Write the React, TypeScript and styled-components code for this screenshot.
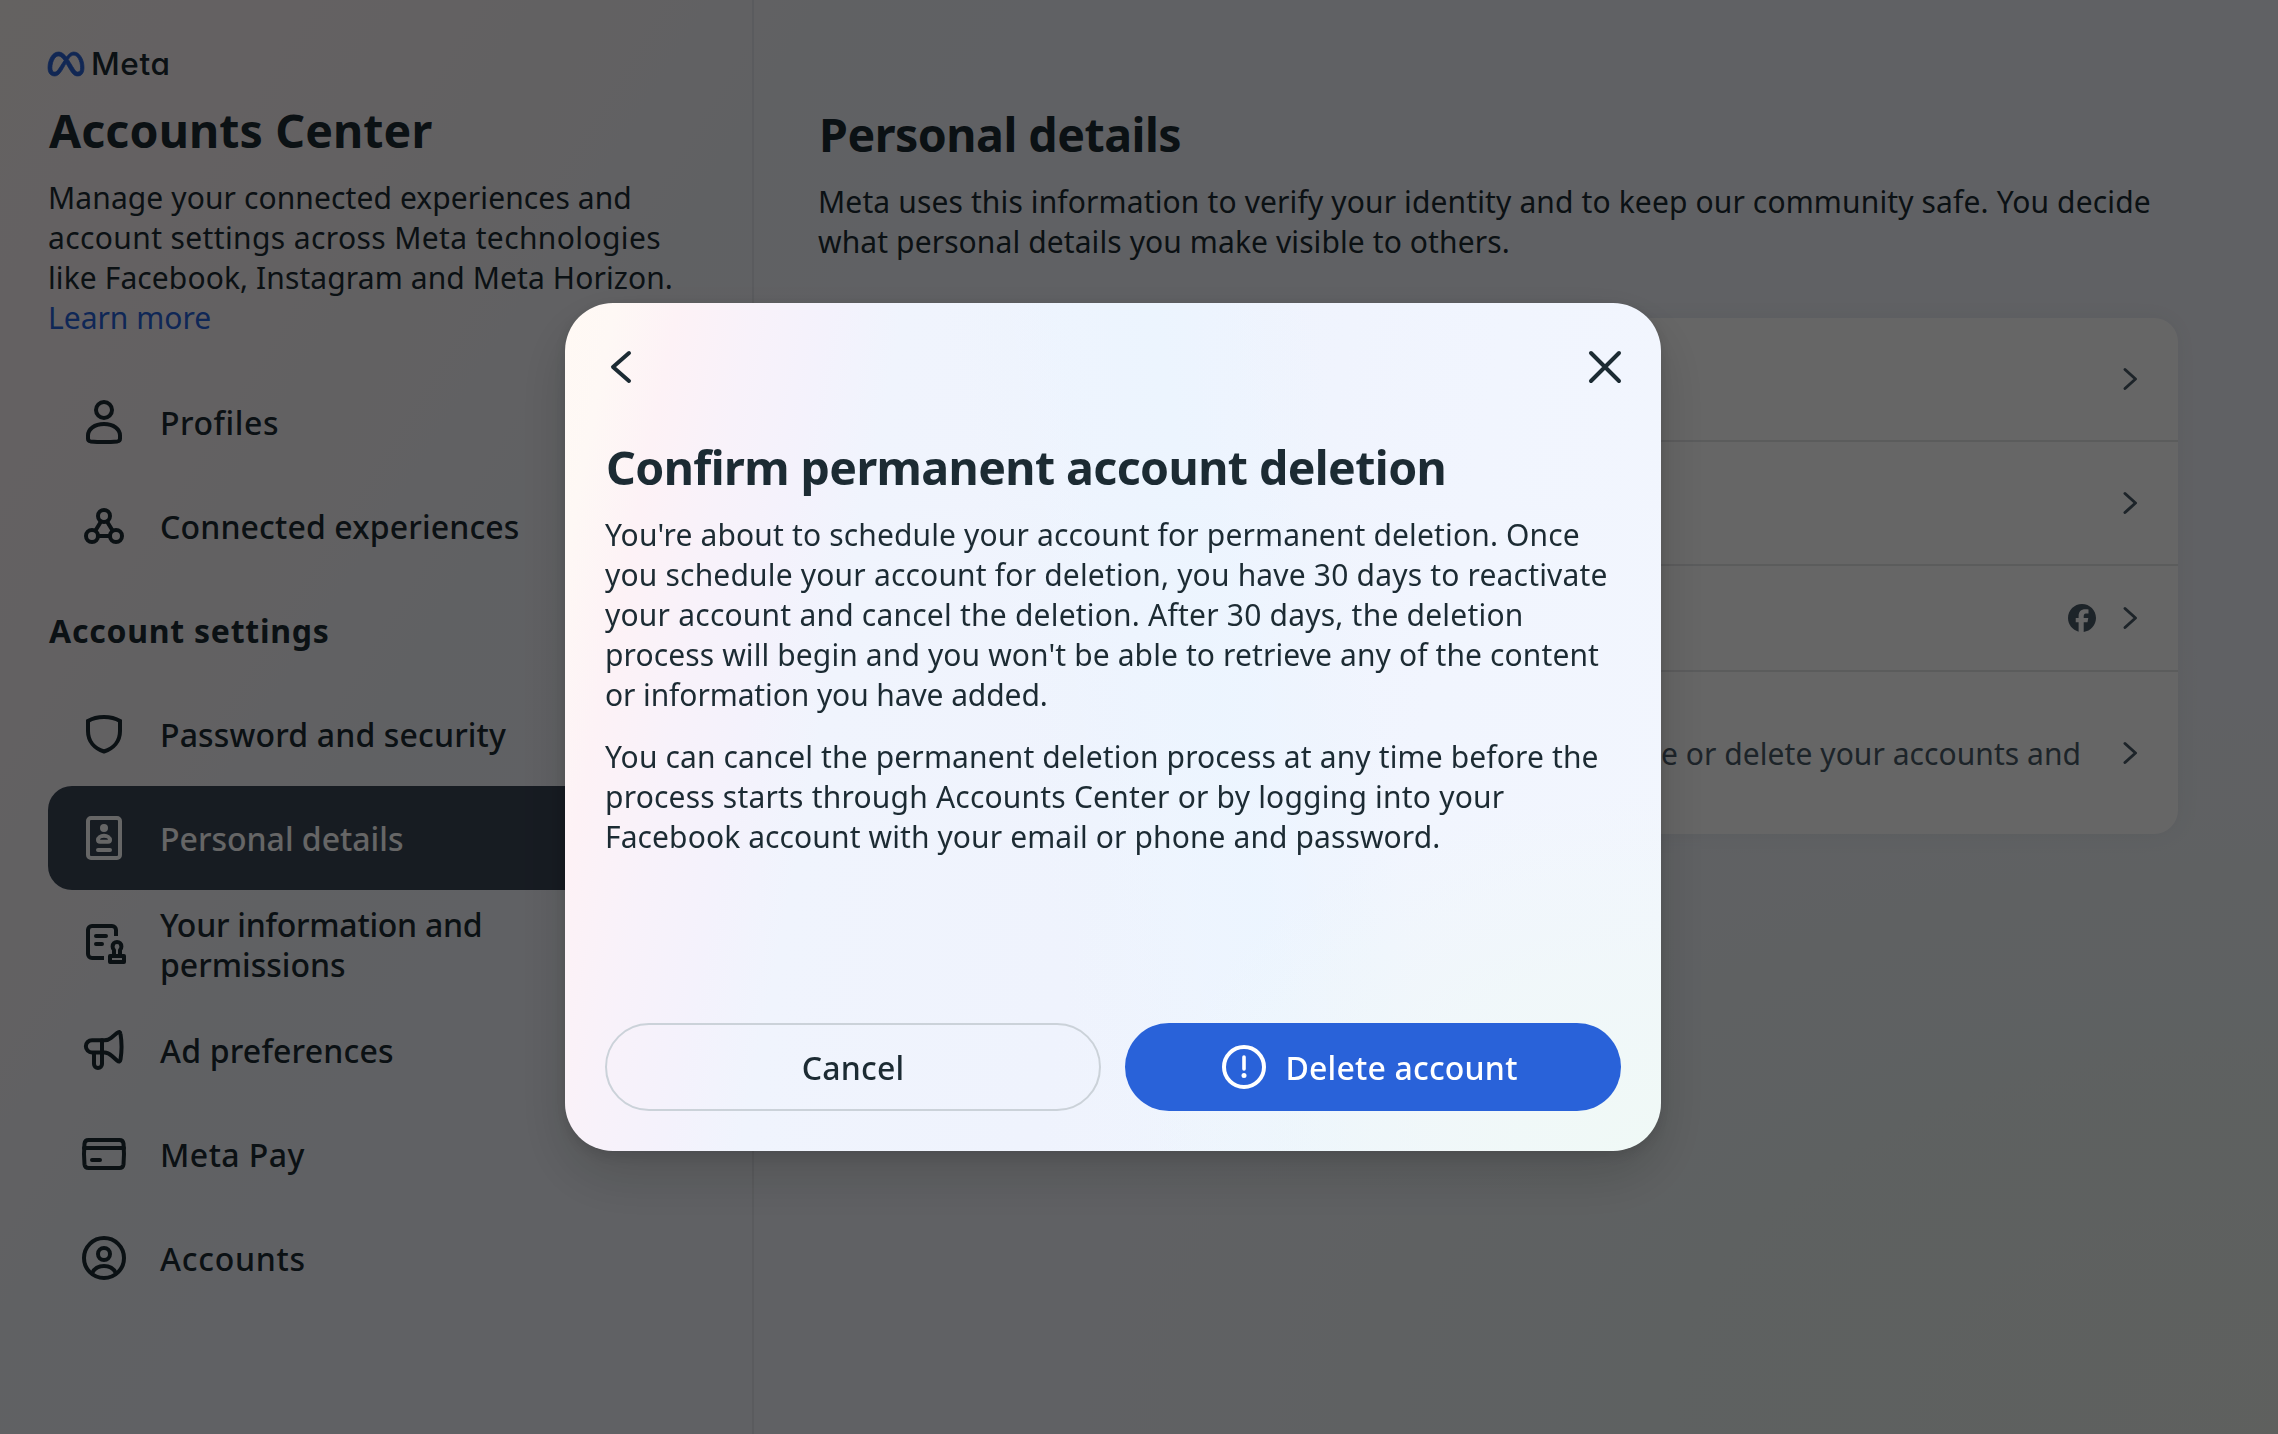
import React from "react";
import styled, { createGlobalStyle } from "styled-components";
import { SiFacebook, SiMeta } from "react-icons/si";

const ink = "#1c2b33";
const muted = "#4a5a68";
const sans = `"Noto Sans", "Open Sans", sans-serif`;

const GlobalStyle = createGlobalStyle`
  * { box-sizing: border-box; }
  body { margin: 0; font-family: ${sans}; color: ${ink}; overflow: hidden; }
  h1, h2, p, nav, ul, li { margin: 0; padding: 0; list-style: none; }
  button { font: inherit; color: inherit; background: none; border: 0; padding: 0; }
`;

const Page = styled.div`
  display: flex;
  width: 100vw;
  height: 100vh;
  background:
    radial-gradient(ellipse 620px 420px at 100% 100%, rgba(240, 240, 234, 0.5), rgba(240, 240, 234, 0) 100%),
    radial-gradient(ellipse 1300px 800px at 100% 100%, #e9f1ee 0%, rgba(233, 242, 240, 0.75) 45%, rgba(240, 243, 252, 0) 100%),
    linear-gradient(122deg, #faf4f2 0%, #faf3f5 6%, #f8f2f6 13%, #f5f3f6 19%, #f1f3f8 26%, #f0f3fa 40%, #f1f3fa 100%);
`;

const Sidebar = styled.aside`
  width: 754px;
  flex: none;
  padding: 48px 48px 0;
  border-right: 2px solid #e1e4ea;
`;

const Brand = styled.div`
  display: flex;
  align-items: center;
  height: 32px;
  gap: 7px;
  margin-bottom: 22px;
  font-family: Inter, sans-serif;
  font-feature-settings: "cv11";
  font-size: 31.5px;
  font-weight: 500;
  line-height: 32px;
  letter-spacing: 0.6px;

  svg {
    color: #2b62d2;
    stroke: currentColor;
    stroke-width: 0.5;
    overflow: visible;
  }
`;

const Title = styled.h1`
  padding-left: 1px;
  font-size: 46.5px;
  font-weight: 700;
  line-height: 56px;
  margin-bottom: 20px;
  white-space: nowrap;
`;

const Line = styled.span<{ $track?: number }>`
  display: block;
  white-space: nowrap;
  letter-spacing: ${(p) => p.$track ?? 0}px;
`;

const Copy = styled.p`
  font-size: 30px;
  line-height: 40px;

  & + & { margin-top: 22px; }
`;

const Link = styled.a`
  color: #2761d8;
`;

const Nav = styled.ul`
  margin-top: 32px;
`;

const SectionLabel = styled.li`
  height: 104px;
  display: flex;
  align-items: center;
  padding: 2px 0 0 1px;
  font-size: 32px;
  font-weight: 700;
  line-height: 40px;
  letter-spacing: 0.75px;
`;

const NavItem = styled.li<{ $active?: boolean }>`
  display: flex;
  align-items: center;
  gap: 32px;
  min-height: 104px;
  padding: 14px 32px;
  border-radius: 24px;
  font-size: 32px;
  font-weight: 500;
  line-height: 40px;
  color: ${(p) => (p.$active ? "#ffffff" : ink)};
  background: ${(p) => (p.$active ? "#3a4656" : "transparent")};
`;

const NavLabel = styled.span`
  margin: 1px 0 -1px;
`;

const Icon = styled.svg`
  width: 48px;
  height: 48px;
  flex: none;
  fill: none;
  stroke: currentColor;
  stroke-width: 4;
  stroke-linecap: round;
  stroke-linejoin: round;
`;

const Content = styled.main`
  flex: 1;
  padding: 106px 100px 0 64px;
`;

const Card = styled.ul`
  margin-top: 56px;
  border-radius: 24px;
  background: #ffffff;
  box-shadow: 0 0 24px rgba(52, 72, 84, 0.07);
`;

const CardRow = styled.li<{ $height: number }>`
  display: flex;
  align-items: center;
  justify-content: flex-end;
  box-sizing: content-box;
  height: ${(p) => p.$height}px;
  padding-right: 36px;
  color: ${muted};

  & + & { border-top: 2px solid #e4e5e7; }
`;

const RowNote = styled.span`
  margin: 2px 37px 0 0;
  font-size: 30px;
  line-height: 40px;
  letter-spacing: 0.05px;
  white-space: nowrap;
`;

const RowBadge = styled.span`
  display: flex;
  margin-right: 22px;
`;

const ChevronIcon = styled.svg`
  width: 24px;
  height: 24px;
  fill: none;
  stroke: currentColor;
  stroke-width: 3;
  stroke-linecap: round;
  stroke-linejoin: round;
`;

const Scrim = styled.div`
  position: fixed;
  inset: 0;
  display: flex;
  align-items: center;
  justify-content: center;
  padding: 20px 52px 0 0;
  background: rgba(0, 0, 0, 0.6);
`;

const Dialog = styled.section`
  display: flex;
  flex-direction: column;
  width: 1096px;
  height: 848px;
  padding: 40px;
  border-radius: 48px;
  box-shadow: 0 24px 56px rgba(0, 0, 0, 0.16), 0 4px 16px rgba(0, 0, 0, 0.12);
  background:
    radial-gradient(ellipse 520px 360px at 100% 100%, #f0f9f6 0%, rgba(240, 248, 248, 0.85) 40%, rgba(241, 245, 254, 0) 100%),
    linear-gradient(80deg, rgba(235, 245, 255, 0) 42%, rgba(235, 245, 255, 0.75) 59%, rgba(235, 245, 255, 0) 72%),
    linear-gradient(101deg, #fff9f4 0%, #fef8f5 4%, #fdf2f6 9%, #f8f2fa 15%, #f4f2fc 21%, #f0f4fd 27%, #eff3fd 50%, #f1f5fe 75%, #f2f6fe 100%);
`;

const DialogBar = styled.div`
  display: flex;
  justify-content: space-between;
  margin: 0 -8px 48px;
`;

const IconButton = styled.button`
  display: flex;
`;

const Actions = styled.div`
  display: flex;
  gap: 24px;
  margin-top: auto;
`;

const Button = styled.button<{ $primary?: boolean }>`
  width: 496px;
  display: flex;
  align-items: center;
  justify-content: center;
  gap: 17px;
  height: 88px;
  padding: ${(p) => (p.$primary ? "0 8px 0 0" : "2px 0 0")};
  border-radius: 44px;
  border: ${(p) => (p.$primary ? "0" : "2px solid #cbd2d9")};
  background: ${(p) => (p.$primary ? "#2962d9" : "transparent")};
  color: ${(p) => (p.$primary ? "#ffffff" : ink)};
  font-size: 32px;
  font-weight: 500;
  line-height: 40px;
  letter-spacing: 0.2px;
`;

const icons = {
  profile: (
    <>
      <circle cx="24" cy="12" r="8" />
      <path d="M24 26C14.5 26 8 31 8 37.5V40.5Q8 43 10.5 43.4Q24 44.6 37.5 43.4Q40 43 40 40.5V37.5C40 31 33.5 26 24 26Z" />
    </>
  ),
  connected: (
    <>
      <circle cx="24" cy="14" r="6" />
      <circle cx="12" cy="34" r="6" />
      <circle cx="36" cy="34" r="6" />
      <path d="M21 19.5L15.5 28.5M27 19.5L32.5 28.5M18 34H30" />
    </>
  ),
  shield: (
    <path
      d="M24 7C30 7 35.500 8.300 40 11V21C40 31.500 33.500 38.500 24 41.500C14.500 38.500 8 31.500 8 21V11C12.500 8.300 18 7 24 7Z"
      strokeLinejoin="miter"
    />
  ),
  personal: (
    <>
      <rect x="8" y="4" width="32" height="40" rx="3" />
      <circle cx="24" cy="14" r="4" fill="currentColor" stroke="none" />
      <path d="M24 21.700C20.500 21.700 18 23.700 18 26Q18 27.700 20 27.700H28Q30 27.700 30 26C30 23.700 27.500 21.700 24 21.700ZM18 36H30" />
    </>
  ),
  information: (
    <>
      <path d="M36 16V10A4 4 0 0 0 32 6H12A4 4 0 0 0 8 10V34A4 4 0 0 0 12 38H24" strokeLinecap="butt" />
      <path d="M16 16H26M16 24H22" />
      <path d="M34 36L34 30Q32.600 28.500 32.600 26.400A4.400 4.400 0 0 1 41.400 26.400Q41.400 28.500 40 30L40 36" strokeLinecap="butt" />
      <path d="M30 36H44V42H30Z" />
    </>
  ),
  megaphone: (
    <>
      <path d="M12 14.200H24.500Q28.500 14.200 31 12L37 7Q40 4.500 40.500 8Q42.600 20.500 40.500 33.500Q40 37 37 34.500L32 30Q28 26.500 24.500 26.500H12A6.150 6.150 0 0 1 12 14.200Z" />
      <path d="M22 14.200V38A4 4 0 0 1 14 38V27" />
    </>
  ),
  card: (
    <>
      <path d="M8.500 10H39.500Q43 10 43.500 13.500Q44.500 24 43.500 34.500Q43 38 39.500 38H8.500Q5 38 4.500 34.500Q3.500 24 4.500 13.500Q5 10 8.500 10Z" />
      <path d="M4 18H44M12 30H20" />
    </>
  ),
  account: (
    <>
      <circle cx="24" cy="24" r="20" />
      <circle cx="24" cy="20" r="6" />
      <path d="M12 39.500C14 34.800 18.500 32 24 32S34 34.800 36 39.500" />
    </>
  ),
};

const NavIcon = ({ name }: { name: keyof typeof icons }) => (
  <Icon viewBox="0 0 48 48">{icons[name]}</Icon>
);

const Chevron = () => (
  <ChevronIcon viewBox="0 0 24 24">
    <path d="M7 2.500L17.500 12L7 21.500" />
  </ChevronIcon>
);

type Entry = { icon: keyof typeof icons; lines: [string, number][]; active?: boolean };

const generalEntries: Entry[] = [
  { icon: "profile", lines: [["Profiles", 0.55]] },
  { icon: "connected", lines: [["Connected experiences", 0.15]] },
];

const settingsEntries: Entry[] = [
  { icon: "shield", lines: [["Password and security", 0.15]] },
  { icon: "personal", lines: [["Personal details", 0]], active: true },
  { icon: "information", lines: [["Your information and", -0.25], ["permissions", 0]] },
  { icon: "megaphone", lines: [["Ad preferences", 0.2]] },
  { icon: "card", lines: [["Meta Pay", 0.45]] },
  { icon: "account", lines: [["Accounts", 0.75]] },
];

const NavEntry = ({ icon, lines, active }: Entry) => (
  <NavItem $active={active}>
    <NavIcon name={icon} />
    <NavLabel>
      {lines.map(([text, track]) => (
        <Line key={text} $track={track}>
          {text}
        </Line>
      ))}
    </NavLabel>
  </NavItem>
);

export default function App() {
  return (
    <>
      <GlobalStyle />
      <Page>
        <Sidebar>
          <Brand>
            <SiMeta size={36} />
            Meta
          </Brand>
          <Title>
            <Line $track={0.1}>Accounts Center</Line>
          </Title>
          <Copy>
            <Line $track={0.1}>Manage your connected experiences and</Line>
            <Line $track={0.38}>account settings across Meta technologies</Line>
            <Line $track={0.1}>like Facebook, Instagram and Meta Horizon.</Line>
            <Link>Learn more</Link>
          </Copy>
          <Nav>
            {generalEntries.map((entry) => (
              <NavEntry key={entry.icon} {...entry} />
            ))}
            <SectionLabel>Account settings</SectionLabel>
            {settingsEntries.map((entry) => (
              <NavEntry key={entry.icon} {...entry} />
            ))}
          </Nav>
        </Sidebar>
        <Content>
          <Title>
            <Line $track={-0.5}>Personal details</Line>
          </Title>
          <Copy>
            <Line $track={0.13}>
              Meta uses this information to verify your identity and to keep our community safe. You decide
            </Line>
            <Line $track={0.1}>what personal details you make visible to others.</Line>
          </Copy>
          <Card>
            <CardRow $height={122}>
              <Chevron />
            </CardRow>
            <CardRow $height={122}>
              <Chevron />
            </CardRow>
            <CardRow $height={104}>
              <RowBadge>
                <SiFacebook size={28} />
              </RowBadge>
              <Chevron />
            </CardRow>
            <CardRow $height={162}>
              <RowNote>e or delete your accounts and</RowNote>
              <Chevron />
            </CardRow>
          </Card>
        </Content>
      </Page>
      <Scrim>
        <Dialog role="dialog">
          <DialogBar>
            <IconButton aria-label="Back">
              <Icon viewBox="0 0 48 48">
                <path d="M32 10L16 24L32 38" />
              </Icon>
            </IconButton>
            <IconButton aria-label="Close">
              <Icon viewBox="0 0 48 48">
                <path d="M10 10L38 38M38 10L10 38" />
              </Icon>
            </IconButton>
          </DialogBar>
          <Title>
            <Line $track={-0.6}>Confirm permanent account deletion</Line>
          </Title>
          <Copy>
            <Line $track={0.14}>You're about to schedule your account for permanent deletion. Once</Line>
            <Line $track={0.18}>you schedule your account for deletion, you have 30 days to reactivate</Line>
            <Line $track={0.21}>your account and cancel the deletion. After 30 days, the deletion</Line>
            <Line $track={0.11}>process will begin and you won't be able to retrieve any of the content</Line>
            <Line $track={-0.1}>or information you have added.</Line>
          </Copy>
          <Copy>
            <Line $track={0.13}>You can cancel the permanent deletion process at any time before the</Line>
            <Line $track={0.2}>process starts through Accounts Center or by logging into your</Line>
            <Line $track={0.1}>Facebook account with your email or phone and password.</Line>
          </Copy>
          <Actions>
            <Button>Cancel</Button>
            <Button $primary>
              <Icon viewBox="0 0 48 48">
                <circle cx="24" cy="24" r="20" />
                <path d="M24 14V26" strokeWidth="3.600" />
                <circle cx="24" cy="32.500" r="2.500" fill="currentColor" stroke="none" />
              </Icon>
              <NavLabel>Delete account</NavLabel>
            </Button>
          </Actions>
        </Dialog>
      </Scrim>
    </>
  );
}
